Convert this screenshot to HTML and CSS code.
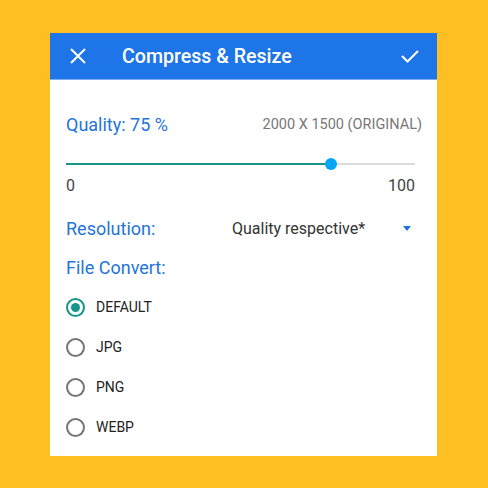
FILE: index.html
```html
<!DOCTYPE html>
<html lang="en">
<head>
    <meta charset="UTF-8">
    <meta name="viewport" content="width=device-width, initial-scale=1.0">
    <title>Compress &amp; Resize</title>
    <link rel="stylesheet" href="styles.css">
</head>
<body>
    <div class="dialog">
        <div class="toolbar">
            <svg class="icon" width="16" height="16" viewBox="0 0 16 16">
                <path d="M1 1 L15 15 M15 1 L1 15" stroke="#fff" stroke-width="2" fill="none"/>
            </svg>
            <span class="title">Compress &amp; Resize</span>
            <svg class="icon check" width="18" height="14" viewBox="0 0 18 14">
                <path d="M1 7 L6.5 12.5 L17 2" stroke="#fff" stroke-width="2" fill="none"/>
            </svg>
        </div>

        <div class="content">
            <div class="quality-row">
                <span class="label">Quality: 75 %</span>
                <span class="size">2000 X 1500 (ORIGINAL)</span>
            </div>

            <div class="slider">
                <div class="track">
                    <div class="fill" style="width: 76%"></div>
                </div>
                <div class="thumb" style="left: 76%"></div>
            </div>
            <div class="scale">
                <span>0</span>
                <span>100</span>
            </div>

            <div class="resolution-row">
                <span class="label">Resolution:</span>
                <span class="select">Quality respective*</span>
                <span class="arrow"></span>
            </div>

            <div class="label convert">File Convert:</div>

            <div class="radios">
                <label class="radio checked"><span class="dot"></span>DEFAULT</label>
                <label class="radio"><span class="dot"></span>JPG</label>
                <label class="radio"><span class="dot"></span>PNG</label>
                <label class="radio"><span class="dot"></span>WEBP</label>
            </div>
        </div>
    </div>
</body>
</html>
```

FILE: styles.css
```css
* {
    box-sizing: border-box;
    margin: 0;
    padding: 0;
}

body {
    font-family: Roboto, "Liberation Sans", sans-serif;
    background: #fdbf22;
    width: 488px;
    height: 488px;
    overflow: hidden;
}

.dialog {
    margin: 33px 0 0 50px;
    width: 387px;
    height: 423px;
    background: #fff;
}

.toolbar {
    height: 47px;
    background: #1e75e8;
    border-bottom: 1px solid #7aaef0;
    display: flex;
    align-items: center;
    padding: 0 18px 0 20px;
    color: #fff;
}

.title {
    font-size: 19.6px;
    font-weight: 500;
    margin-left: 36px;
    flex: 1;
}

.content {
    padding: 0 22px 0 16px;
    display: flex;
    flex-direction: column;
}

.label {
    color: #1f74d9;
    font-size: 18px;
}

.quality-row {
    margin-top: 32px;
    height: 24px;
    display: flex;
    justify-content: space-between;
    align-items: center;
    margin-right: -7px;
}

.size {
    font-size: 14.5px;
    color: #777;
}

.slider {
    position: relative;
    margin-top: 22px;
    height: 12px;
    display: flex;
    align-items: center;
}

.track {
    width: 100%;
    height: 2px;
    background: #dcdcdc;
}

.fill {
    height: 2px;
    background: #16968a;
}

.thumb {
    position: absolute;
    top: 0;
    width: 12px;
    height: 12px;
    margin-left: -6px;
    border-radius: 50%;
    background: #06a6f4;
}

.scale {
    margin-top: 6px;
    height: 18px;
    display: flex;
    justify-content: space-between;
    align-items: center;
    font-size: 16px;
    color: #444;
}

.resolution-row {
    margin-top: 22px;
    height: 24px;
    display: flex;
    align-items: center;
}

.resolution-row .label {
    width: 166px;
}

.select {
    flex: 1;
    font-size: 16px;
    color: #333;
}

.arrow {
    width: 0;
    height: 0;
    border-left: 4px solid transparent;
    border-right: 4px solid transparent;
    border-top: 5px solid #1f74d9;
    margin-right: 4px;
}

.convert {
    margin-top: 16px;
    height: 24px;
    line-height: 24px;
}

.radios {
    margin-top: 7px;
    display: flex;
    flex-direction: column;
}

.radio {
    height: 40px;
    display: flex;
    align-items: center;
    font-size: 14px;
    color: #222;
}

.dot {
    width: 19px;
    height: 19px;
    border: 2px solid #757575;
    border-radius: 50%;
    margin-right: 11px;
    display: flex;
    align-items: center;
    justify-content: center;
}

.radio.checked .dot {
    border-color: #16968a;
}

.radio.checked .dot::after {
    content: "";
    width: 9px;
    height: 9px;
    border-radius: 50%;
    background: #16968a;
}
```
